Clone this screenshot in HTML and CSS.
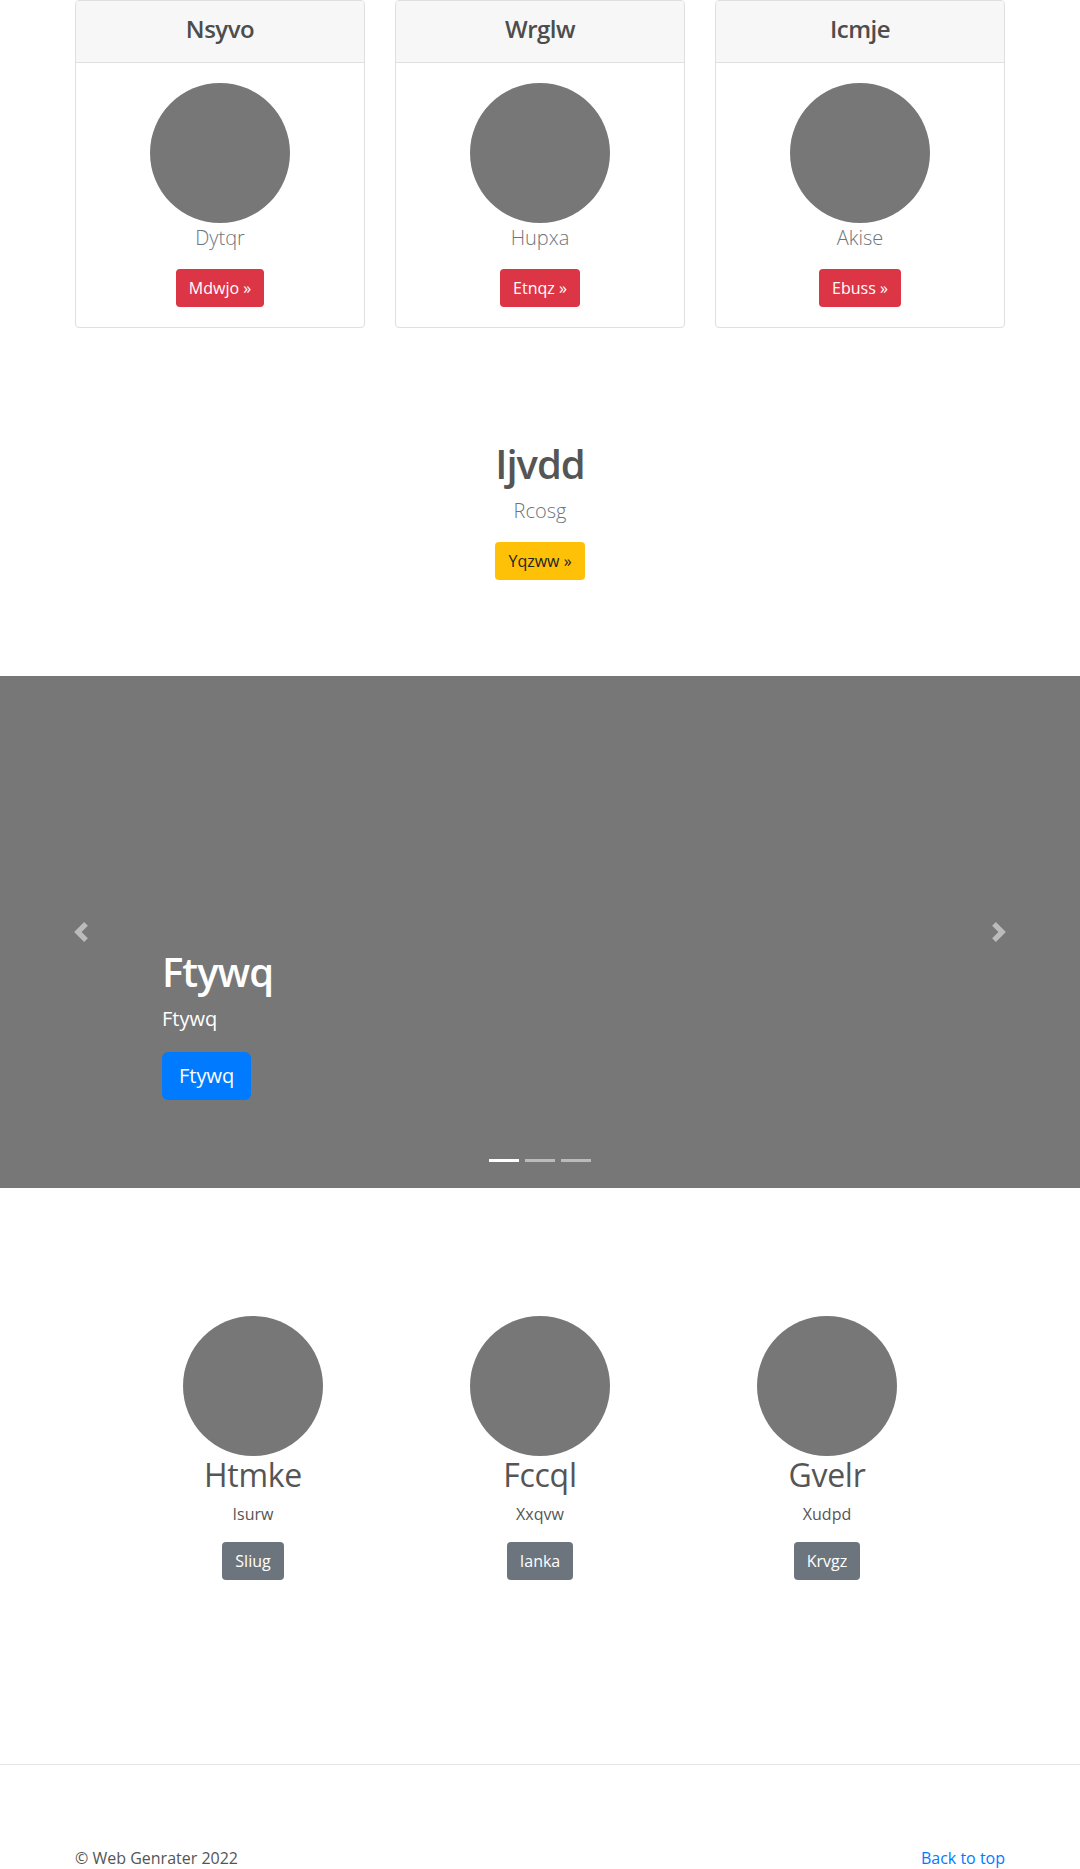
FILE: index.html
```html
<!DOCTYPE html>
<html lang="en">
<head>
<meta charset="utf-8">
<title>Web Genrater</title>
<link rel="stylesheet" href="styles.css">
</head>
<body>
<section class="container card-row">
  <div class="card">
    <div class="card-header"><h4 class="card-title">Nsyvo</h4></div>
    <div class="card-body">
      <div class="avatar"></div>
      <p class="lead">Dytqr</p>
      <a class="btn btn-danger" href="#">Mdwjo &raquo;</a>
    </div>
  </div>
  <div class="card">
    <div class="card-header"><h4 class="card-title">Wrglw</h4></div>
    <div class="card-body">
      <div class="avatar"></div>
      <p class="lead">Hupxa</p>
      <a class="btn btn-danger" href="#">Etnqz &raquo;</a>
    </div>
  </div>
  <div class="card">
    <div class="card-header"><h4 class="card-title">Icmje</h4></div>
    <div class="card-body">
      <div class="avatar"></div>
      <p class="lead">Akise</p>
      <a class="btn btn-danger" href="#">Ebuss &raquo;</a>
    </div>
  </div>
</section>

<section class="feature">
  <h1 class="feature-title">Ijvdd</h1>
  <p class="lead">Rcosg</p>
  <a class="btn btn-warning" href="#">Yqzww &raquo;</a>
</section>

<section class="carousel">
  <a class="carousel-control prev" href="#">
    <svg width="20" height="20" viewBox="0 0 8 8"><path d="M5.25 0l-4 4 4 4 1.5-1.5L4.25 4l2.5-2.5L5.25 0z" fill="#fff"/></svg>
  </a>
  <div class="caption">
    <h1 class="caption-title">Ftywq</h1>
    <p class="caption-text">Ftywq</p>
    <a class="btn btn-lg btn-primary" href="#">Ftywq</a>
  </div>
  <a class="carousel-control next" href="#">
    <svg width="20" height="20" viewBox="0 0 8 8"><path d="M2.75 0l-1.5 1.5L3.75 4l-2.5 2.5L2.75 8l4-4-4-4z" fill="#fff"/></svg>
  </a>
  <ol class="indicators">
    <li class="active"></li>
    <li></li>
    <li></li>
  </ol>
</section>

<section class="marketing">
  <div class="col">
    <div class="avatar"></div>
    <h2 class="col-title">Htmke</h2>
    <p class="col-text">Isurw</p>
    <a class="btn btn-secondary" href="#">Sliug</a>
  </div>
  <div class="col">
    <div class="avatar"></div>
    <h2 class="col-title">Fccql</h2>
    <p class="col-text">Xxqvw</p>
    <a class="btn btn-secondary" href="#">Ianka</a>
  </div>
  <div class="col">
    <div class="avatar"></div>
    <h2 class="col-title">Gvelr</h2>
    <p class="col-text">Xudpd</p>
    <a class="btn btn-secondary" href="#">Krvgz</a>
  </div>
</section>

<hr class="divider">

<footer class="footer">
  <p class="copy">&copy; Web Genrater 2022</p>
  <p class="top-link"><a href="#">Back to top</a></p>
</footer>
</body>
</html>
```

FILE: styles.css
```css
* {
  box-sizing: border-box;
}

body {
  margin: 0;
  font-family: "Open Sans", "Noto Sans", sans-serif;
  font-size: 16px;
  line-height: 1.5;
  color: #555;
  background: #fff;
}

.container {
  width: 930px;
  margin: 0 auto;
}

.card-row {
  display: grid;
  grid-template-columns: repeat(3, 1fr);
  gap: 30px;
}

.card {
  border: 1px solid #dfdfdf;
  border-radius: 4px;
  text-align: center;
  overflow: hidden;
}

.card-header {
  background: #f7f7f7;
  border-bottom: 1px solid #dfdfdf;
  padding: 10px 20px 15px;
}

.card-title {
  margin: 0;
  font-size: 24px;
  line-height: 36px;
  font-weight: 600;
  letter-spacing: -0.5px;
  color: #4d4d4d;
}

.card-body {
  padding: 20px;
  display: flex;
  flex-direction: column;
  align-items: center;
}

.avatar {
  width: 140px;
  height: 140px;
  border-radius: 50%;
  background: #777;
}

.lead {
  font-size: 20px;
  font-weight: 300;
  line-height: 30px;
  margin: 0 0 16px;
  color: #6c757d;
}

.btn {
  display: inline-block;
  padding: 6px 12px;
  font-size: 16px;
  line-height: 24px;
  border: 1px solid transparent;
  border-radius: 4px;
  text-decoration: none;
}

.btn-danger {
  background: #dc3545;
  color: #fff;
}

.btn-warning {
  background: #ffc107;
  color: #212529;
}

.btn-secondary {
  background: #6c757d;
  color: #fff;
}

.btn-primary {
  background: #007bff;
  color: #fff;
}

.btn-lg {
  padding: 8px 16px;
  font-size: 20px;
  line-height: 30px;
  border-radius: 6px;
}

.feature {
  padding: 112px 0 96px;
  display: flex;
  flex-direction: column;
  align-items: center;
}

.feature-title {
  margin: 0 0 8px;
  font-size: 40px;
  line-height: 48px;
  font-weight: 600;
  letter-spacing: -1px;
  color: #555;
}

.carousel {
  position: relative;
  height: 512px;
  background: #777;
  display: flex;
  align-items: flex-end;
  padding: 0 162px 88px;
  color: #fff;
}

.caption {
  display: flex;
  flex-direction: column;
  align-items: flex-start;
}

.caption-title {
  margin: 0 0 8px;
  font-size: 40px;
  line-height: 48px;
  font-weight: 600;
  letter-spacing: -1px;
}

.caption-text {
  margin: 0 0 18px;
  font-size: 20px;
  line-height: 30px;
}

.carousel-control {
  position: absolute;
  top: 0;
  bottom: 0;
  width: 162px;
  display: flex;
  align-items: center;
  justify-content: center;
  opacity: 0.5;
}

.carousel-control.prev {
  left: 0;
}

.carousel-control.next {
  right: 0;
}

.indicators {
  position: absolute;
  left: 0;
  right: 0;
  bottom: 16px;
  margin: 0;
  padding: 0;
  list-style: none;
  display: flex;
  justify-content: center;
}

.indicators li {
  width: 30px;
  height: 23px;
  margin: 0 3px;
  border-top: 10px solid transparent;
  border-bottom: 10px solid transparent;
  background: rgba(255, 255, 255, 0.5);
  background-clip: padding-box;
}

.indicators li.active {
  background-color: #fff;
}

.marketing {
  width: 861px;
  margin: 0 auto;
  padding-top: 128px;
  display: grid;
  grid-template-columns: repeat(3, 1fr);
}

.col {
  display: flex;
  flex-direction: column;
  align-items: center;
}

.col-title {
  margin: 0 0 8px;
  font-size: 32px;
  line-height: 38px;
  font-weight: 400;
  letter-spacing: -0.3px;
  color: #555;
}

.col-text {
  margin: 0 0 16px;
}

.divider {
  border: 0;
  border-top: 1px solid #e5e5e5;
  margin: 184px 0 81px;
}

.footer {
  width: 930px;
  margin: 0 auto;
  display: flex;
  justify-content: space-between;
}

.footer p {
  margin: 0 0 16px;
}

.top-link a {
  color: #007bff;
  text-decoration: none;
}
```
